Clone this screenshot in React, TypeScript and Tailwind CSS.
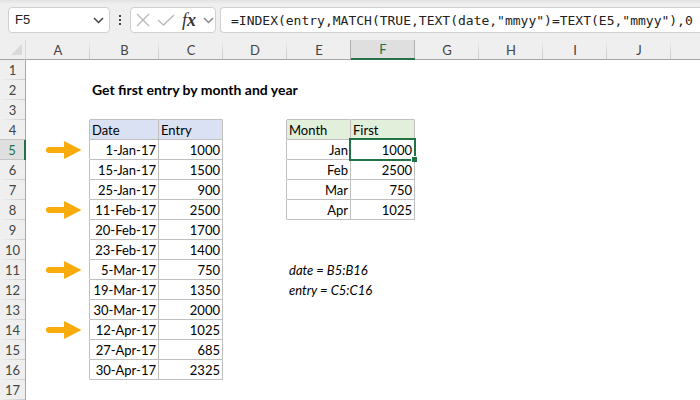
import React from 'react';
import { clsx } from 'clsx';

const columns = ['A', 'B', 'C', 'D', 'E', 'F', 'G', 'H', 'I', 'J', ''];
const rowCount = 17;
const activeColumn = 'F';
const activeRow = 5;
const arrowRows = [5, 8, 11, 14];

const entries = [
  ['1-Jan-17', '1000'],
  ['15-Jan-17', '1500'],
  ['25-Jan-17', '900'],
  ['11-Feb-17', '2500'],
  ['20-Feb-17', '1700'],
  ['23-Feb-17', '1400'],
  ['5-Mar-17', '750'],
  ['19-Mar-17', '1350'],
  ['30-Mar-17', '2000'],
  ['12-Apr-17', '1025'],
  ['27-Apr-17', '685'],
  ['30-Apr-17', '2325'],
];

const firsts = [
  ['Jan', '1000'],
  ['Feb', '2500'],
  ['Mar', '750'],
  ['Apr', '1025'],
];

const cells: Record<string, string> = {
  B2: 'Get first entry by month and year',
  B4: 'Date',
  C4: 'Entry',
  E4: 'Month',
  F4: 'First',
  E11: 'date = B5:B16',
  E12: 'entry = C5:C16',
};

entries.forEach(([date, entry], i) => {
  cells[`B${i + 5}`] = date;
  cells[`C${i + 5}`] = entry;
});

firsts.forEach(([month, first], i) => {
  cells[`E${i + 5}`] = month;
  cells[`F${i + 5}`] = first;
});

const Arrow = () => (
  <svg className="ml-[18px] block" width="36" height="18" viewBox="0 0 36 18" fill="#f9ab0c" aria-hidden="true">
    <path d="M3 6H18V0L35.5 9L18 18V12H3A3 3 0 0 1 3 6Z" />
  </svg>
);

const Chevron = ({ color }: { color: string }) => (
  <svg width="11" height="7" viewBox="0 0 11 7" fill="none" stroke={color} strokeWidth="1.5" aria-hidden="true">
    <path d="M1 1L5.5 5.5L10 1" />
  </svg>
);

const FormulaBar = () => (
  <header className="flex h-10 items-center bg-linear-to-b from-[#e2e2e2] via-[#efefef] via-10% to-[#efefef] pl-2">
    <div className="flex h-[26px] w-[102px] shrink-0 items-center rounded border border-[#d0d0d0] bg-white pr-[5px] pl-[6px]">
      <input
        aria-label="Name box"
        defaultValue="F5"
        className="min-w-0 flex-1 font-['Liberation_Sans',sans-serif] text-[13px] text-[#222] outline-none"
      />
      <button aria-label="Show names">
        <Chevron color="#444" />
      </button>
    </div>

    <svg className="mx-2 shrink-0" width="4" height="12" viewBox="0 0 4 12" fill="#444" aria-hidden="true">
      <path d="M1 1h2v2H1zM1 5h2v2H1zM1 9h2v2H1z" />
    </svg>

    <div className="flex h-[26px] w-[86px] shrink-0 items-center justify-between rounded border border-[#d0d0d0] bg-white pr-px pl-[5px]">
      <button aria-label="Cancel">
        <svg width="14" height="14" viewBox="0 0 14 14" fill="none" stroke="#b8b8b8" strokeWidth="1.3" aria-hidden="true">
          <path d="M1 1L13 13M13 1L1 13" />
        </svg>
      </button>
      <button aria-label="Enter">
        <svg width="18" height="14" viewBox="0 0 18 14" fill="none" stroke="#b8b8b8" strokeWidth="1.4" aria-hidden="true">
          <path d="M1 7L6.5 12L17 2" />
        </svg>
      </button>
      <button
        aria-label="Insert function"
        className="font-['Liberation_Serif',serif] text-lg leading-5 text-[#333] italic"
      >
        f<b>x</b>
      </button>
      <button aria-label="Function list">
        <Chevron color="#888" />
      </button>
    </div>

    <input
      aria-label="Formula"
      defaultValue={'=INDEX(entry,MATCH(TRUE,TEXT(date,"mmyy")=TEXT(E5,"mmyy"),0'}
      className="ml-1 h-[26px] min-w-0 flex-1 rounded-l border border-r-0 border-[#d0d0d0] bg-white pl-[10px] font-['DejaVu_Sans_Mono',monospace] text-[13px] text-[#222] outline-none"
    />
  </header>
);

const Cell = ({ column, row }: { column: string; row: number }) => {
  const id = `${column}${row}`;
  const inEntries = (column === 'B' || column === 'C') && row >= 4 && row <= 16;
  const inFirsts = (column === 'E' || column === 'F') && row >= 4 && row <= 8;
  const bordered = inEntries || inFirsts;
  const active = column === activeColumn && row === activeRow;
  // cells just left of or above a bordered range draw its outer edge
  const leftEdge = (column === 'A' && row >= 4 && row <= 16) || (column === 'D' && row >= 4 && row <= 8);
  const topEdge = row === 3 && ['B', 'C', 'E', 'F'].includes(column);

  return (
    <td
      className={clsx(
        'h-5 border-r border-b p-0 whitespace-nowrap',
        active && 'relative',
        bordered || leftEdge ? 'border-r-[#bfbfbf]' : 'border-r-transparent',
        bordered || topEdge ? 'border-b-[#bfbfbf]' : 'border-b-transparent',
        bordered && row > 4 ? 'pr-[2px] text-right' : 'pl-[2px] text-left',
        row === 4 && inEntries && 'bg-[#d9e1f2]',
        row === 4 && inFirsts && 'bg-[#e2efda]',
        row === 2 && 'text-sm leading-[18px] font-bold',
        (id === 'E11' || id === 'E12') && 'italic',
      )}
    >
      {column === 'A' && arrowRows.includes(row) ? <Arrow /> : cells[id]}
      {active && (
        <>
          <span className="absolute -inset-[2px] z-10 border-2 border-[#217346]" />
          <span className="absolute -right-[3px] -bottom-[3px] z-10 size-[6px] border-t border-l border-white bg-[#217346]" />
        </>
      )}
    </td>
  );
};

const Sheet = () => (
  <table className="w-full table-fixed border-separate border-spacing-0 font-[Lato,sans-serif] text-[13px] leading-[18px] text-black">
    <colgroup>
      <col className="w-[26px]" />
      {columns.map((column) => (
        <col key={column} className={column === 'B' ? 'w-[69px]' : column ? 'w-16' : ''} />
      ))}
    </colgroup>
    <thead>
      <tr className="bg-[#efefef] text-[#444]">
        <th aria-label="Select all" className="h-5 border-r border-b border-r-[#d8d8d8] border-b-[#a6a6a6] p-0">
          <svg className="ml-auto mr-[3px] block" width="11" height="11" viewBox="0 0 11 11" fill="#d9d9d9" aria-hidden="true">
            <path d="M11 0V11H0Z" />
          </svg>
        </th>
        {columns.map((column) => (
          <th
            key={column}
            scope="col"
            className={clsx(
              'relative h-5 border-b p-0 font-normal',
              column === activeColumn
                ? 'border-b-2 border-[#217346] bg-[#dfdfdf] text-[#217346]'
                : 'border-[#a6a6a6]',
            )}
          >
            {column}
            {column && (
              <span
                className={clsx(
                  'absolute inset-y-0 right-0 w-px',
                  column === 'E' || column === activeColumn
                    ? 'bg-[#b0b0b0]'
                    : 'bg-linear-to-b from-[#efefef] to-[#c8c8c8]',
                )}
              />
            )}
          </th>
        ))}
      </tr>
    </thead>
    <tbody>
      {Array.from({ length: rowCount }, (_, i) => i + 1).map((row) => (
        <tr key={row}>
          <th
            scope="row"
            className={clsx(
              'relative h-5 p-0 font-normal',
              row === activeRow
                ? 'border-r-2 border-[#217346] bg-[#dfdfdf] text-[#217346]'
                : 'border-r border-[#a6a6a6] bg-[#efefef] text-[#444]',
            )}
          >
            {row}
            <span
              className={clsx(
                'absolute inset-x-0 bottom-0 h-px',
                row === activeRow || row === activeRow - 1
                  ? 'bg-[#c4c4c4]'
                  : 'bg-linear-to-r from-[#efefef] to-[#cccccc]',
              )}
            />
          </th>
          {columns.map((column) => (
            <Cell key={column} column={column} row={row} />
          ))}
        </tr>
      ))}
    </tbody>
  </table>
);

const App: React.FC = () => {
  return (
    <div className="h-screen overflow-hidden bg-white">
      <FormulaBar />
      <Sheet />
    </div>
  );
};

export default App;
